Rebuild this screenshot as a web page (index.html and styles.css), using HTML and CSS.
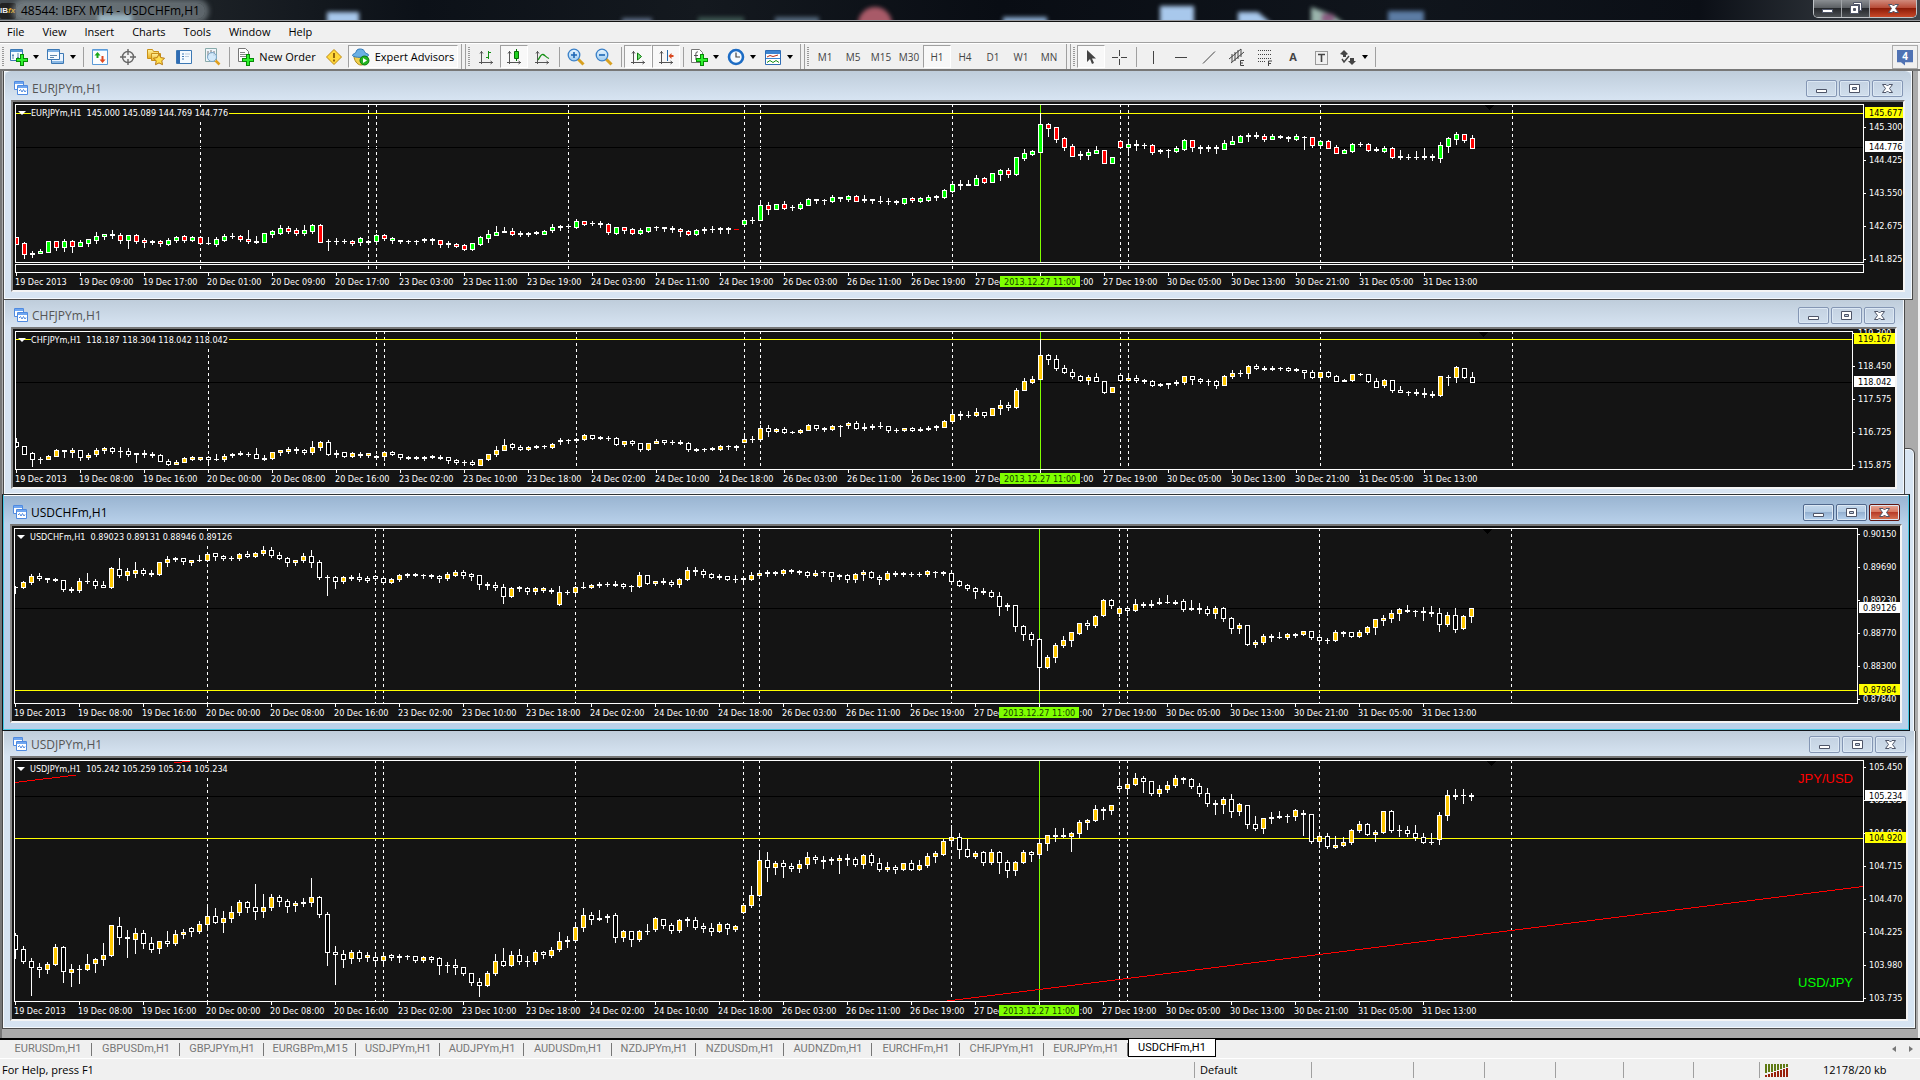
FILE: index.html
```html
<!DOCTYPE html>
<html lang="en">
<head>
    <meta charset="UTF-8">
    <meta name="viewport" content="width=device-width, initial-scale=1.0">
    <title>48544: IBFX MT4 - USDCHFm,H1</title>
    <link rel="stylesheet" href="styles.css">
</head>
<body>
    <!-- icon set -->
    <svg class="sprite" aria-hidden="true">
        <defs>
            <linearGradient id="gold" x1="0" y1="0" x2="0" y2="1"><stop offset="0" stop-color="#fff3a0"/><stop offset="1" stop-color="#eab020"/></linearGradient>
            <linearGradient id="sky" x1="0" y1="0" x2="0" y2="1"><stop offset="0" stop-color="#eaf6ff"/><stop offset="1" stop-color="#9ccbf0"/></linearGradient>
        </defs>
        <symbol id="i-newchart" viewBox="0 0 18 18"><path d="M.5 1.500h12v11h-12z" fill="#f6fbff" stroke="#3c78b4"/><path d="M1 2h11v2H1z" fill="#5a9ad8"/><path d="M3 6v5M2 7.500h2M8 5v6M7 9.500h2" stroke="#5f87ad"/><path d="M10 6h4v4h4v4h-4v4h-4v-4H6v-4h4z" fill="#078a07"/><path d="M11 7h2v4h4v2h-4v4h-2v-4H7v-2h4z" fill="#2ef02e"/></symbol>
        <symbol id="i-profiles" viewBox="0 0 18 18"><path d="M4.500 5.500h12v10h-12z" fill="#eaf4ff" stroke="#3c78b4"/><path d="M5 13h11v2H5z" fill="#8ab8e4"/><path d="M.5 1.500h12v10h-12z" fill="#f6fbff" stroke="#3c78b4"/><path d="M1 2h11v2H1z" fill="#7fb3e6"/><path d="M3 7.500h7M3 9.500h4" stroke="#5f87ad"/></symbol>
        <symbol id="i-market" viewBox="0 0 18 18"><path d="M1.500 1.500h15v15h-15z" fill="#fbfdff" stroke="#5a9ad8"/><path d="M2 2h14v1H2z" fill="#8ac0f0"/><path d="M6.500 4l3 3.500h-2V10h-2V7.500h-2z" fill="#18a818"/><path d="M11.500 15l-3-3.500h2V8h2v3.500h2z" fill="#e04820"/></symbol>
        <symbol id="i-target" viewBox="0 0 18 18"><circle cx="9" cy="9" r="5.500" fill="none" stroke="#666" stroke-width="1.400"/><path d="M9 1v6M9 11v6M1 9h6M11 9h6" stroke="#666" stroke-width="1.400"/></symbol>
        <symbol id="i-star" viewBox="0 0 18 18"><path d="M.5 1.500h5l1 2h5v7h-11z" fill="url(#gold)" stroke="#c89018"/><path d="M4.500 5.500h9v7h-9z" fill="url(#gold)" stroke="#c89018"/><path d="M12 6l1.800 3.600 3.700.6-2.700 2.700.7 3.800-3.500-1.800-3.500 1.800.7-3.800-2.700-2.700 3.700-.6z" fill="#ffe050" stroke="#b87810"/></symbol>
        <symbol id="i-nav" viewBox="0 0 18 18"><path d="M1.500 2.500h15v13h-15z" fill="#f4faff" stroke="#3c78b4"/><path d="M2 3h3v12H2z" fill="#2f6cb4"/><path d="M7 6h2M7 8.500h2M7 11h2" stroke="#3c78b4"/><path d="M10 6h5M10 8.500h4" stroke="#bcd"/></symbol>
        <symbol id="i-tester" viewBox="0 0 18 18"><path d="M2.500.5h11v13h-11z" fill="#eef5fb" stroke="#8aa"/><path d="M5 3v5M8 2v4M11 3v5" stroke="#777"/><circle cx="9" cy="9" r="4.500" fill="#cbe6fa" fill-opacity=".8" stroke="#7aa6c8"/><path d="M12.500 12.500l4 4" stroke="#e0a020" stroke-width="2.500"/></symbol>
        <symbol id="i-order" viewBox="0 0 18 18"><path d="M2.500.5h7l3 3v10h-10z" fill="#fff" stroke="#777"/><path d="M4 4.500h5M4 6.500h6M4 8.500h6" stroke="#888"/><path d="M10 6h4v4h4v4h-4v4h-4v-4H6v-4h4z" fill="#078a07"/><path d="M11 7h2v4h4v2h-4v4h-2v-4H7v-2h4z" fill="#2ef02e"/></symbol>
        <symbol id="i-warn" viewBox="0 0 18 18"><path d="M9 1.500L16.500 9 9 16.500 1.500 9z" fill="#ffd83c" stroke="#c08a10"/><path d="M9 5v5M9 11.500v2" stroke="#7a4a00" stroke-width="1.600"/></symbol>
        <symbol id="i-expert" viewBox="0 0 18 18"><path d="M2 8c0 4 3 9 7 9s6-4 6-9z" fill="#f0d050" stroke="#b08a18"/><path d="M.5 7.500C1 5 4 6 4.500 3S12 .5 12.500 3.500 17 5 16.500 7.500 1 10 .5 7.500z" fill="#6ab0e4" stroke="#2f78b8"/><circle cx="12.500" cy="12.500" r="4.500" fill="#22b422" stroke="#0a7a0a"/><path d="M11 10l4 2.500-4 2.500z" fill="#fff"/></symbol>
        <symbol id="i-axis" viewBox="0 0 18 18"><path d="M4.500 3v13M2 14.500h14M3 5.500l1.500-2 1.500 2M13.500 13l2 1.500-2 1.500" fill="none" stroke="#555"/></symbol>
        <symbol id="i-bars" viewBox="0 0 18 18"><use href="#i-axis"/><path d="M11.500 3v8M9 9.500h2.500M11.500 4.500H14" stroke="#159015"/></symbol>
        <symbol id="i-candle" viewBox="0 0 18 18"><use href="#i-axis"/><path d="M11.500 1v12" stroke="#067006"/><path d="M9.500 3.500h4v7h-4z" fill="#1fd01f" stroke="#067006"/></symbol>
        <symbol id="i-line" viewBox="0 0 18 18"><use href="#i-axis"/><path d="M5 12c2-3 3-6 5-5.500s3 3 6 4" fill="none" stroke="#159015" stroke-width="1.300"/></symbol>
        <symbol id="i-zoomin" viewBox="0 0 18 18"><path d="M11 11l5.500 5.500" stroke="#d8a020" stroke-width="3"/><circle cx="7" cy="7" r="5.800" fill="url(#sky)" stroke="#3a80c8" stroke-width="1.300"/><path d="M7 4v6M4 7h6" stroke="#1c66b4" stroke-width="1.600"/></symbol>
        <symbol id="i-zoomout" viewBox="0 0 18 18"><path d="M11 11l5.500 5.500" stroke="#d8a020" stroke-width="3"/><circle cx="7" cy="7" r="5.800" fill="url(#sky)" stroke="#3a80c8" stroke-width="1.300"/><path d="M4 7h6" stroke="#1c66b4" stroke-width="1.600"/></symbol>
        <symbol id="i-scroll" viewBox="0 0 18 18"><use href="#i-axis"/><path d="M8.500 5l4 3.500-4 3.500z" fill="#7ae07a" stroke="#0a7a0a"/></symbol>
        <symbol id="i-shift" viewBox="0 0 18 18"><use href="#i-axis"/><path d="M10.500 2v11" stroke="#2468a8"/><path d="M11.500 8l3-3v2h2v2h-2v2z" fill="#d84820"/></symbol>
        <symbol id="i-indicator" viewBox="0 0 18 18"><path d="M1.500 1.500h8l3 3v10h-11z" fill="#fff" stroke="#777"/><path d="M8 4c-3-1-2 3-2 8M4 7.500h4" fill="none" stroke="#555"/><path d="M10 6h4v4h4v4h-4v4h-4v-4H6v-4h4z" fill="#078a07"/><path d="M11 7h2v4h4v2h-4v4h-2v-4H7v-2h4z" fill="#2ef02e"/></symbol>
        <symbol id="i-clock" viewBox="0 0 18 18"><circle cx="9" cy="9" r="7" fill="#f4faff" stroke="#1d6cc4" stroke-width="2.600"/><path d="M9 4.500V9h4" fill="none" stroke="#444" stroke-width="1.200"/></symbol>
        <symbol id="i-template" viewBox="0 0 18 18"><path d="M1.500 2.500h15v14h-15z" fill="#fff" stroke="#2f6cb4"/><path d="M2 3h14v3H2zM2 10h14v1H2z" fill="#3c84d0"/><path d="M3 9l3-1.500 3 1 5-1.500" fill="none" stroke="#b83018"/><path d="M3 14.500l3-2 3 2 3-2 3 2" fill="none" stroke="#159015"/></symbol>
        <symbol id="i-cursor" viewBox="0 0 18 18"><path d="M5 2v12l3-3 2 5 2-1-2-4.500h4z" fill="#444"/></symbol>
        <symbol id="i-cross" viewBox="0 0 18 18"><path d="M9.500 2v6M9.500 11v6M2 9.500h6M11 9.500h6" stroke="#444"/></symbol>
        <symbol id="i-vline" viewBox="0 0 18 18"><path d="M9.500 3v13" stroke="#444"/></symbol>
        <symbol id="i-hline" viewBox="0 0 18 18"><path d="M3 9.500h12" stroke="#444"/></symbol>
        <symbol id="i-trend" viewBox="0 0 18 18"><path d="M3 15.500L15 3.500" stroke="#444"/></symbol>
        <symbol id="i-channel" viewBox="0 0 18 18"><path d="M1 11L13 1M3 15L16 4M4 6v8M7 4v9M10 2v9M13 1v8" stroke="#444"/><path d="M16 12.500h-3.500v5H16M12.500 15H15" fill="none" stroke="#444"/></symbol>
        <symbol id="i-fibo" viewBox="0 0 18 18"><path d="M2 2.500h14M2 6.500h14M2 10.500h14M2 13.500h8" stroke="#444" stroke-dasharray="1 1"/><path d="M12.500 18v-5H16M12.500 15.500H15" fill="none" stroke="#444"/></symbol>
        <symbol id="i-label" viewBox="0 0 18 18"><path d="M3.500 3.500h12v13h-12z" fill="none" stroke="#444" stroke-dasharray="1 1"/><path d="M6 6.500h7M9.500 6v8" stroke="#444" stroke-width="1.600"/></symbol>
        <symbol id="i-shapes" viewBox="0 0 18 18"><path d="M5 2l4 4-2 1v2H4V7L1 6zM13 17l-4-4h2v-3h4v3h2z" fill="#444"/><path d="M3 11l2 3 5-6" fill="none" stroke="#444" stroke-width="1.400"/></symbol>
        <symbol id="i-window" viewBox="0 0 14 14"><path d="M.5.5h9v8h-9z" fill="#fff" stroke="#4f8ae0"/><path d="M1 1h8v2H1z" fill="#6fa6f0"/><path d="M3.500 4.500h10v9h-10z" fill="#fff" stroke="#4f8ae0"/><path d="M4 5h9v2H4z" fill="#6fa6f0"/><path d="M5 10l1.500-1.500L8 11l1.500-2.500L11 11l1-1.500" fill="none" stroke="#4f8ae0"/></symbol>
        <symbol id="w-min" viewBox="0 0 15 13"><path d="M2.500 7.500h10v3h-10z" fill="#fff" stroke="#4e5568"/></symbol>
        <symbol id="w-max" viewBox="0 0 15 13"><path d="M2.500 2.500h10v8h-10z" fill="#fff" stroke="#4e5568"/><path d="M5.500 5.500h4v2h-4z" fill="#c4d2e2" stroke="#4e5568"/></symbol>
        <symbol id="w-close" viewBox="0 0 15 13"><path d="M2.500 2.500h3.500l1.500 1.500L9 2.500h3.500L9.500 6.500l3 4H9L7.500 9 6 10.500H2.500l3-4z" fill="#fff" stroke="#4e5568"/></symbol>
        <symbol id="w-restore" viewBox="0 0 15 13"><path d="M5.500.5h8v8h-2v-6h-6z" fill="#fff" stroke="#4e5568"/><path d="M2.500 3.500h8v8h-8z" fill="#fff" stroke="#4e5568"/><path d="M5.500 6.500h2v2h-2z" fill="#555" stroke="#4e5568"/></symbol>
    </svg>

    <header class="title-bar">
        <svg class="glass" aria-hidden="true">
            <g filter="blur(2px)">
                <rect x="98" y="14" width="34" height="12" fill="#9cc6dc"/>
                <rect x="327" y="12" width="32" height="12" fill="#a8c8ec"/>
                <rect x="622" y="18" width="30" height="8" fill="#5c6c84"/>
                <rect x="698" y="17" width="46" height="8" fill="#3c5450"/>
                <rect x="775" y="17" width="44" height="8" fill="#54687c"/>
                <circle cx="875" cy="24" r="17" fill="#a85a68"/>
                <rect x="1003" y="17" width="44" height="8" fill="#88a8cc"/>
                <rect x="1160" y="6" width="34" height="18" fill="#a8c8ec"/>
                <path d="M1238 12h20l14 12h-34z" fill="#a8c8ec"/>
                <path d="M1311 7l22 8 12 9h-34z" fill="#9ab4ac"/>
                <path d="M1322 14h12v8h-12z" fill="#8a5a80"/>
                <rect x="1388" y="11" width="36" height="12" fill="#5c7ca4"/>
            </g>
        </svg>
        <span class="app-icon">IB<i>fx</i></span>
        <h1>48544: IBFX MT4 - USDCHFm,H1</h1>
        <div class="caption">
            <button aria-label="Minimize"><svg><use href="#w-min"/></svg></button>
            <button aria-label="Restore"><svg><use href="#w-restore"/></svg></button>
            <button class="close" aria-label="Close"><svg><use href="#w-close"/></svg></button>
        </div>
    </header>

    <nav class="menu-bar">
        <button>File</button>
        <button>View</button>
        <button>Insert</button>
        <button>Charts</button>
        <button>Tools</button>
        <button>Window</button>
        <button>Help</button>
    </nav>

    <div class="toolbar">
        <span class="grip"></span>
        <button class="tool drop" aria-label="New chart"><svg><use href="#i-newchart"/></svg></button>
        <button class="tool drop" aria-label="Profiles"><svg><use href="#i-profiles"/></svg></button>
        <span class="sep"></span>
        <button class="tool" aria-label="Market watch"><svg><use href="#i-market"/></svg></button>
        <button class="tool" aria-label="Data window"><svg><use href="#i-target"/></svg></button>
        <button class="tool" aria-label="Navigator"><svg><use href="#i-star"/></svg></button>
        <button class="tool" aria-label="Terminal"><svg><use href="#i-nav"/></svg></button>
        <button class="tool" aria-label="Strategy tester"><svg><use href="#i-tester"/></svg></button>
        <span class="sep"></span>
        <button class="tool order"><svg><use href="#i-order"/></svg>New Order</button>
        <button class="tool" aria-label="MetaEditor"><svg><use href="#i-warn"/></svg></button>
        <button class="tool expert on"><svg><use href="#i-expert"/></svg>Expert Advisors</button>
        <span class="sep end"></span>
        <span class="grip"></span>
        <button class="tool" aria-label="Bar chart"><svg><use href="#i-bars"/></svg></button>
        <button class="tool on" aria-label="Candlesticks"><svg><use href="#i-candle"/></svg></button>
        <button class="tool" aria-label="Line chart"><svg><use href="#i-line"/></svg></button>
        <span class="sep"></span>
        <button class="tool" aria-label="Zoom in"><svg><use href="#i-zoomin"/></svg></button>
        <button class="tool" aria-label="Zoom out"><svg><use href="#i-zoomout"/></svg></button>
        <span class="sep"></span>
        <button class="tool on" aria-label="Auto scroll"><svg><use href="#i-scroll"/></svg></button>
        <button class="tool on" aria-label="Chart shift"><svg><use href="#i-shift"/></svg></button>
        <span class="sep"></span>
        <button class="tool drop" aria-label="Indicators"><svg><use href="#i-indicator"/></svg></button>
        <button class="tool drop" aria-label="Periods"><svg><use href="#i-clock"/></svg></button>
        <button class="tool drop" aria-label="Templates"><svg><use href="#i-template"/></svg></button>
        <span class="sep end"></span>
        <span class="grip"></span>
        <button class="tool">M1</button>
        <button class="tool">M5</button>
        <button class="tool">M15</button>
        <button class="tool">M30</button>
        <button class="tool on">H1</button>
        <button class="tool">H4</button>
        <button class="tool">D1</button>
        <button class="tool">W1</button>
        <button class="tool">MN</button>
        <span class="sep end"></span>
        <span class="grip"></span>
        <button class="tool on" aria-label="Cursor"><svg><use href="#i-cursor"/></svg></button>
        <button class="tool" aria-label="Crosshair"><svg><use href="#i-cross"/></svg></button>
        <span class="sep"></span>
        <button class="tool" aria-label="Vertical line"><svg><use href="#i-vline"/></svg></button>
        <button class="tool" aria-label="Horizontal line"><svg><use href="#i-hline"/></svg></button>
        <button class="tool" aria-label="Trendline"><svg><use href="#i-trend"/></svg></button>
        <button class="tool" aria-label="Equidistant channel"><svg><use href="#i-channel"/></svg></button>
        <button class="tool" aria-label="Fibonacci"><svg><use href="#i-fibo"/></svg></button>
        <button class="tool letter">A</button>
        <button class="tool" aria-label="Text label"><svg><use href="#i-label"/></svg></button>
        <button class="tool drop" aria-label="Arrows"><svg><use href="#i-shapes"/></svg></button>
        <span class="sep"></span>
        <button class="chat">4</button>
    </div>

    <main class="workspace">
        <div class="window behind"></div>
        <section class="window win1">
            <div class="win-title">
                <svg class="win-icon"><use href="#i-window"/></svg>
                <h2>EURJPYm,H1</h2>
                <button aria-label="Minimize"><svg><use href="#w-min"/></svg></button>
                <button aria-label="Maximize"><svg><use href="#w-max"/></svg></button>
                <button class="close" aria-label="Close"><svg><use href="#w-close"/></svg></button>
            </div>
            <div class="chart" id="eurjpy"><p class="quote">EURJPYm,H1&nbsp; 145.000 145.089 144.769 144.776</p></div>
        </section>
        <section class="window win2">
            <div class="win-title">
                <svg class="win-icon"><use href="#i-window"/></svg>
                <h2>CHFJPYm,H1</h2>
                <button aria-label="Minimize"><svg><use href="#w-min"/></svg></button>
                <button aria-label="Maximize"><svg><use href="#w-max"/></svg></button>
                <button class="close" aria-label="Close"><svg><use href="#w-close"/></svg></button>
            </div>
            <div class="chart" id="chfjpy"><p class="quote">CHFJPYm,H1&nbsp; 118.187 118.304 118.042 118.042</p></div>
        </section>
        <section class="window win3 active">
            <div class="win-title">
                <svg class="win-icon"><use href="#i-window"/></svg>
                <h2>USDCHFm,H1</h2>
                <button aria-label="Minimize"><svg><use href="#w-min"/></svg></button>
                <button aria-label="Maximize"><svg><use href="#w-max"/></svg></button>
                <button class="close" aria-label="Close"><svg><use href="#w-close"/></svg></button>
            </div>
            <div class="chart" id="usdchf"><p class="quote">USDCHFm,H1&nbsp; 0.89023 0.89131 0.88946 0.89126</p></div>
        </section>
        <section class="window win4">
            <div class="win-title">
                <svg class="win-icon"><use href="#i-window"/></svg>
                <h2>USDJPYm,H1</h2>
                <button aria-label="Minimize"><svg><use href="#w-min"/></svg></button>
                <button aria-label="Maximize"><svg><use href="#w-max"/></svg></button>
                <button class="close" aria-label="Close"><svg><use href="#w-close"/></svg></button>
            </div>
            <div class="chart" id="usdjpy">
                <p class="quote">USDJPYm,H1&nbsp; 105.242 105.259 105.214 105.234</p>
                <span class="pair sell">JPY/USD</span>
                <span class="pair buy">USD/JPY</span>
            </div>
        </section>
    </main>

    <nav class="tabs">
        <button>EURUSDm,H1</button>
        <button>GBPUSDm,H1</button>
        <button class="narrow">GBPJPYm,H1</button>
        <button class="wide">EURGBPm,M15</button>
        <button class="narrow">USDJPYm,H1</button>
        <button class="narrow">AUDJPYm,H1</button>
        <button>AUDUSDm,H1</button>
        <button class="narrow">NZDJPYm,H1</button>
        <button>NZDUSDm,H1</button>
        <button>AUDNZDm,H1</button>
        <button>EURCHFm,H1</button>
        <button class="narrow">CHFJPYm,H1</button>
        <button class="narrow">EURJPYm,H1</button>
        <button class="current">USDCHFm,H1</button>
        <span class="scrollers"><i class="left"></i><i class="right"></i></span>
    </nav>

    <footer class="status-bar">
        <span>For Help, press F1</span>
        <span>Default</span>
        <span></span>
        <span></span>
        <span></span>
        <span></span>
        <span></span>
        <span></span>
        <span class="traffic">
            <svg width="24" height="13" shape-rendering="crispEdges">
                <path d="M1 0v9M4 0v8M7 0v8M10 0v7M13 0v6M16 0v5M19 0v4M22 0v3" stroke="#5f7a14" stroke-width="2"/>
                <path d="M1 11v2M4 10v3M7 9v4M10 8v5M13 7v6M16 6v7M19 5v8M22 4v9" stroke="#98200c" stroke-width="2"/>
            </svg>
            12178/20 kb
        </span>
    </footer>

    <script src="charts.js"></script>
</body>
</html>
```

FILE: styles.css
```css
* {
    box-sizing: border-box;
}

body {
    margin: 0;
    min-height: 100vh;
    display: flex;
    flex-direction: column;
    background: #f0f0f0;
    color: #000;
    font: 11px/16px "Open Sans", "Noto Sans", sans-serif;
    overflow: hidden;
}

button {
    margin: 0;
    padding: 0;
    border: 0;
    background: none;
    color: inherit;
    font: inherit;
}

h1, h2, p {
    margin: 0;
    font: inherit;
}

.sprite {
    position: absolute;
    width: 0;
    height: 0;
}

/* title bar */
.title-bar {
    position: relative;
    display: flex;
    align-items: center;
    height: 22px;
    background: linear-gradient(90deg, #444b50 0, #1c2126 200px, #0c1118 420px, #14191f 700px, #090d14 1000px, #10151c 1400px, #0b0f16 1700px, #40464c 100%);
    border-bottom: 1px solid #111;
    box-shadow: inset 0 -1px #9a9ca0;
    overflow: hidden;
}

.glass {
    position: absolute;
    left: 0;
    top: 0;
    width: 100%;
    height: 20px;
}

.app-icon {
    position: relative;
    width: 16px;
    height: 16px;
    background: #222;
    border-radius: 2px;
    color: #eee;
    font: bold 8px/16px "Liberation Sans", sans-serif;
    overflow: hidden;
}

.app-icon i {
    color: #f0b020;
}

.title-bar h1 {
    position: relative;
    padding: 0 5px;
    border-radius: 10px;
    background: rgba(150, 160, 165, 0.55);
    box-shadow: 0 0 5px 4px rgba(150, 160, 165, 0.55);
    font-size: 12px;
}

.caption {
    position: relative;
    display: flex;
    align-self: flex-start;
    margin-left: auto;
    margin-right: 3px;
    border: 1px solid #c0c4c8;
    border-top: 0;
    border-radius: 0 0 5px 5px;
    overflow: hidden;
}

.caption button {
    width: 28px;
    height: 17px;
    border-right: 1px solid #a0a4a8;
    background: linear-gradient(#8a8e92 0, #5c6064 45%, #25282c 50%, #4c5054 100%);
}

.caption .close {
    width: 46px;
    border-right: 0;
    background: linear-gradient(#d08a7c 0, #b84c38 45%, #8c1c08 50%, #c84828 100%);
}

.caption svg {
    display: block;
    margin: 1px auto;
    width: 15px;
    height: 13px;
}

/* menu */
.menu-bar {
    display: flex;
    gap: 18px;
    height: 21px;
    padding: 0 7px;
    border-bottom: 1px solid #a0a0a0;
}

/* toolbar */
.toolbar {
    display: flex;
    align-items: center;
    height: 28px;
    border-top: 1px solid #fff;
    border-bottom: 2px solid #777;
}

.grip {
    width: 6px;
    height: 20px;
    background: repeating-linear-gradient(#999 0, #999 1px, #f0f0f0 1px, #f0f0f0 2px) 2px 0 / 2px 100% no-repeat;
}

.sep {
    width: 6px;
    height: 20px;
    background: linear-gradient(#a0a0a0, #a0a0a0) 3px 0 / 1px 100% no-repeat;
}

.sep.end {
    width: 8px;
    height: 25px;
    border-right: 1px solid #a0a0a0;
}

.tool {
    display: flex;
    align-items: center;
    justify-content: center;
    width: 28px;
    height: 23px;
    color: #444;
    font: 10px/12px "Open Sans", "Noto Sans", sans-serif;
}

.tool svg {
    width: 18px;
    height: 18px;
}

.tool.on {
    border: 1px solid #a0a0a0;
    border-right-color: #fff;
    border-bottom-color: #fff;
    background: #f8f8f8;
}

.tool.drop {
    width: 37px;
    gap: 5px;
}

.tool.drop::after {
    content: "";
    border: 3px solid transparent;
    border-top: 4px solid #000;
    border-bottom: 0;
}

.tool.order,
.tool.expert {
    gap: 5px;
    color: #000;
    font-size: 11px;
    line-height: 16px;
    white-space: nowrap;
}

.tool.order {
    width: 88px;
}

.tool.expert {
    width: 110px;
}

.tool.letter {
    font: bold 11px/16px "Open Sans", sans-serif;
}

.chat {
    position: relative;
    width: 26px;
    height: 24px;
    margin: 0 2px 0 auto;
    border: 1px solid #aaa;
    color: #fff;
    font: bold 10px/13px "Open Sans", sans-serif;
    z-index: 0;
}

.chat::before {
    content: "";
    position: absolute;
    left: 4px;
    top: 4px;
    width: 16px;
    height: 16px;
    background: #4f72b4;
    clip-path: polygon(0 0, 100% 0, 100% 80%, 50% 80%, 50% 100%, 25% 80%, 0 80%);
    z-index: -1;
}

/* chart windows */
.workspace {
    position: relative;
    flex: 1;
    background: #ababab;
    border-left: 2px solid #777;
    border-right: 2px solid #f0f0f0;
    overflow: hidden;
}

.window {
    position: relative;
    padding: 0 7px 7px;
    background: #d7e4f2;
    border: 1px solid #4a4a4a;
    border-top: 0;
    box-shadow: inset 0 0 0 1px #f4f8fc;
}

.win-title {
    display: flex;
    align-items: flex-end;
    gap: 2px;
    margin: 0 -6px;
    padding: 0 8px 3px 8px;
    background: linear-gradient(#bfcddb, #d7e4f2);
    color: #555;
}

.win-title h2 {
    flex: 1;
    padding-left: 2px;
    font-size: 12px;
}

.win-icon {
    width: 14px;
    height: 14px;
    margin: 0 0 2px 1px;
}

.win-title button {
    width: 31px;
    height: 17px;
    border: 1px solid #8496b4;
    border-radius: 2px;
    background: linear-gradient(#c4d2e2, #d0deec);
    box-shadow: inset 0 0 0 1px #dce8f4;
}

.win-title button svg {
    display: block;
    margin: 1px auto;
    width: 15px;
    height: 13px;
}

.active {
    background: #b9d1ea;
    border-color: #101418;
    border-top: 1px solid #303438;
    box-shadow: inset 0 0 0 1px #45c8e4;
}

.active .win-title {
    background: linear-gradient(#99b4d1, #b9d1ea);
    color: #000;
}

.active .win-title button {
    border-color: #50688c;
    background: linear-gradient(#c4d8ec 0, #b4cce4 45%, #94b0d0 50%, #b8d4f0 100%);
}

.active .win-title .close {
    border-color: #601410;
    background: linear-gradient(#e8a898 0, #d87860 45%, #b83c28 50%, #d87858 100%);
}

.win1 {
    margin: 0 5px 0 1px;
}

.win1 .win-title {
    height: 29px;
    border-radius: 6px 6px 0 0;
}

.win2 {
    margin: 0 13px 0 1px;
    padding-bottom: 5px;
    border-bottom: 0;
}

.win2 .win-title {
    height: 27px;
}

.win3 {
    margin: 0 8px 0 0;
}

.win3 .win-title {
    height: 29px;
    border-top: 1px solid #fff;
}

.win4 {
    margin: 0 2px 0 0;
}

.win4 .win-title {
    height: 25px;
}

.behind {
    position: absolute;
    top: 377px;
    right: 3px;
    width: 60px;
    height: 290px;
    border-top: 1px solid #4a4a4a;
    border-radius: 6px;
}

.chart {
    position: relative;
    border: 2px solid #f4f4f4;
    border-top-color: #777;
    border-left-color: #888;
    background: #141414;
    overflow: hidden;
}

.chart svg {
    display: block;
    width: 100%;
}

.chart text {
    font: 9px "DejaVu Sans Condensed", "DejaVu Sans", sans-serif;
    fill: #fff;
}

.chart .stamp {
    fill: #143c00;
}

.chart .dark {
    fill: #000;
}

.quote {
    position: absolute;
    left: 18px;
    top: 5px;
    padding-right: 1px;
    background: #141414;
    color: #fff;
    font: 9px/12px "DejaVu Sans Condensed", "DejaVu Sans", sans-serif;
    white-space: nowrap;
}

.quote::before {
    content: "";
    position: absolute;
    left: -13px;
    top: 4px;
    border: 4px solid transparent;
    border-top-color: #fff;
    border-bottom: 0;
}

.pair {
    position: absolute;
    right: 53px;
    font: 13px/16px "Liberation Sans", Arial, sans-serif;
}

.sell {
    top: 13px;
    color: #f00;
}

.buy {
    bottom: 28px;
    color: #0f0;
}

/* chart tabs */
.tabs {
    display: flex;
    height: 21px;
    padding-left: 4px;
    border-top: 2px solid #000;
    border-bottom: 1px solid #fff;
    color: #777;
    font: 11px/16px Roboto, sans-serif;
}

.tabs button {
    width: 88px;
    height: 17px;
    line-height: 15px;
    background: linear-gradient(#777, #777) 100% 3px / 1px 13px no-repeat;
}

.tabs .narrow {
    width: 84px;
}

.tabs .wide {
    width: 92px;
}

.tabs .current {
    height: 18px;
    margin-top: -1px;
    border: 1px solid #000;
    border-top: 0;
    background: #fff;
    color: #000;
}

.scrollers {
    display: flex;
    align-items: center;
    gap: 13px;
    margin-left: auto;
    padding-right: 7px;
}

.scrollers i {
    border: 4px solid transparent;
    border-width: 3px 4px;
}

.scrollers .left {
    border-left: 0;
    border-right-color: #777;
}

.scrollers .right {
    border-right: 0;
    border-left-color: #777;
}

/* status bar */
.status-bar {
    display: grid;
    grid-template-columns: 1fr 117px 102px 71px 71px 68px 70px 66px 161px;
    height: 21px;
    padding-top: 3px;
}

.status-bar span {
    height: 16px;
    padding-left: 5px;
    border-left: 1px solid #a0a0a0;
}

.status-bar span:first-child {
    padding-left: 2px;
    border: 0;
}

.status-bar .traffic {
    display: flex;
    align-items: center;
    gap: 34px;
}
```

FILE: charts.js
```js
// Candles are "open high low close", in rows below the top edge of the plot.
var eurjpy = `133 133 140 140,139 138 154 150,149 147 153 150,149 145 149 147,148 137 148 137,137 137 146 143,143 135 147 137,137 136 148 142,142 136 142 138,139 135 142 135,
136 128 139 132,132 130 135 130,130 126 134 131,131 129 139 136,136 131 144 131,131 130 139 137,136 134 143 138,137 136 140 138,137 136 142 139,140 134 141 136,
136 132 138 133,132 131 138 136,136 132 137 133,133 132 140 139,139 133 140 139,140 133 142 135,136 130 137 132,132 129 134 132,132 131 137 135,135 126 139 137,
137 132 139 138,138 129 138 129,130 126 133 127,129 121 130 124,124 122 129 127,126 124 131 129,129 121 131 126,127 120 129 121,121 120 138 138,137 135 146 137,
137 134 140 137,137 135 139 137,137 136 141 139,138 133 141 134,137 136 139 138,137 130 139 131,131 130 136 134,136 133 139 134,136 136 139 137,137 136 139 137,
137 136 140 137,135 134 138 136,135 134 140 136,136 136 143 140,139 137 143 140,140 139 143 142,141 140 146 145,145 139 146 139,140 132 141 133,134 126 138 130,
131 122 131 128,127 123 128 128,127 124 131 130,129 127 132 130,129 128 132 130,128 127 130 129,130 126 130 127,126 120 128 123,122 121 126 123,122 121 124 122,
123 115 124 117,117 117 121 120,119 117 121 119,119 117 123 120,120 119 130 128,129 123 130 123,123 123 129 126,125 124 130 129,129 124 130 126,127 123 128 123,
123 122 126 123,123 123 127 124,124 122 128 125,125 124 132 127,127 126 131 130,130 125 131 126,125 123 129 126,125 122 128 125,124 123 129 125,124 123 129 125,
125 125 125 125,120 115 121 116,116 113 119 116,116 98 116 101,101 98 110 105,105 100 105 100,100 97 105 104,103 101 106 103,104 98 105 100,101 94 101 95,
95 95 99 96,96 95 100 96,97 91 98 93,93 93 97 94,95 91 97 92,92 91 97 97,95 91 98 96,95 95 99 96,97 92 99 97,97 94 100 97,
97 96 100 98,99 94 100 94,94 93 98 96,97 93 98 94,96 91 97 93,92 91 96 93,93 85 94 86,87 77 88 80,80 76 85 81,80 76 81 81,
81 71 81 74,74 73 79 78,78 69 78 69,70 65 76 66,66 64 73 70,70 53 71 53,54 45 56 49,50 46 51 47,48 9 48 20,20 19 32 24,
23 23 38 35,34 33 46 43,42 40 52 52,50 47 55 51,51 45 55 48,49 42 49 46,46 46 59 59,59 53 59 53,37 36 43 43,43 35 51 40,
40 36 46 41,41 39 44 41,41 40 50 48,46 45 49 47,46 45 53 46,47 42 48 44,45 35 46 36,36 36 47 43,43 41 49 44,43 41 47 44,
43 41 49 44,45 36 45 39,40 32 40 37,38 31 38 32,31 29 37 32,31 28 34 32,32 30 37 35,35 30 35 32,32 31 34 33,33 32 37 34,
35 30 36 32,33 32 45 33,33 33 43 41,41 36 44 37,37 36 44 44,43 41 49 49,49 45 49 46,47 39 48 40,40 38 42 40,40 39 47 46,
45 43 47 46,47 42 48 44,44 43 54 53,52 46 55 53,53 50 55 53,53 47 55 53,52 44 55 53,52 50 56 53,54 38 58 41,42 33 48 34,
35 28 40 30,30 30 38 36,34 31 44 44`;

var chfjpy = `111 107 116 115,115 115 123 123,122 121 135 128,128 126 132 128,128 124 128 125,125 118 125 119,119 119 126 120,121 117 126 119,119 119 129 126,126 122 128 124,
123 117 125 119,119 116 122 117,117 116 122 120,120 116 126 120,120 117 125 123,122 122 131 123,122 119 126 123,123 121 126 124,124 123 130 130,130 128 134 133,
133 129 133 131,131 126 131 127,128 125 129 126,128 126 129 126,126 125 134 128,128 123 129 128,128 123 130 125,124 122 126 123,122 120 124 123,123 121 125 123,
123 117 127 127,127 124 129 128,127 121 128 121,121 119 124 119,120 116 122 118,118 116 122 119,119 118 123 121,121 110 123 116,116 110 119 111,111 109 124 123,
123 119 126 122,121 121 126 125,125 121 126 122,123 121 126 124,124 122 126 122,125 124 128 126,125 120 129 121,121 120 124 123,123 123 128 126,126 125 128 127,
126 125 128 127,126 125 129 127,125 124 127 126,126 124 128 127,126 126 132 129,129 128 133 131,131 129 134 131,131 129 134 133,134 128 134 128,128 123 129 123,
123 115 125 119,119 108 119 114,113 112 118 116,116 114 119 118,118 115 119 116,115 114 117 116,115 114 117 115,116 112 117 113,109 107 113 110,109 108 112 109,
108 107 111 109,108 103 109 104,104 104 108 107,106 105 108 107,107 105 109 107,107 106 114 113,113 110 115 110,110 109 114 112,112 112 120 118,118 112 119 112,
112 108 112 110,109 109 113 111,111 109 113 111,111 109 113 112,112 111 120 118,118 117 120 119,118 117 120 118,117 116 119 118,118 114 119 115,115 114 118 115,
115 114 119 116,111 102 111 108,108 105 111 108,108 94 109 97,97 94 105 100,100 97 101 98,98 96 102 101,101 100 102 101,101 98 102 99,99 93 99 94,
94 94 99 97,97 96 100 98,98 94 99 95,95 94 105 95,94 91 97 92,92 90 98 97,96 92 99 97,95 93 98 96,95 91 97 95,95 95 101 99,
99 97 101 99,99 97 100 97,97 96 100 99,98 96 100 99,97 95 99 98,95 94 99 96,96 89 96 90,90 78 91 83,83 80 88 84,84 80 86 84,
84 77 85 81,81 81 86 84,84 77 84 77,77 69 83 74,74 71 79 76,76 57 77 59,59 47 59 50,51 45 52 48,48 8 48 24,24 23 33 28,
28 24 39 37,37 34 42 41,41 38 47 45,45 44 50 49,49 44 53 46,46 42 50 50,50 50 62 61,61 56 61 56,44 43 50 49,49 42 50 47,
47 44 51 49,49 48 52 50,50 49 55 54,53 52 55 54,52 52 57 53,51 49 54 52,51 45 53 45,45 45 53 48,48 47 52 50,50 48 54 50,
50 49 57 54,54 44 54 45,45 39 47 42,42 39 45 42,42 34 47 35,35 33 38 37,37 35 39 38,37 35 39 38,37 36 39 37,37 36 40 39,
38 37 40 39,39 39 47 41,41 39 47 46,46 41 50 41,41 40 46 45,45 44 50 50,49 48 50 50,49 43 50 43,43 42 44 43,43 43 51 50,
50 47 56 56,54 48 56 49,49 49 61 59,59 55 61 61,61 60 64 61,61 58 64 62,62 57 66 63,63 60 66 64,64 45 65 45,46 44 54 46,
46 35 51 36,37 37 47 46,46 41 51 51`;

var usdchf = `59 58 65 59,59 53 60 54,54 46 56 48,48 45 52 50,50 50 54 51,51 50 53 52,52 52 63 61,61 59 64 62,62 50 64 53,53 45 55 53,
53 51 60 57,57 53 59 59,59 39 60 40,41 30 49 47,47 40 52 43,45 34 49 42,42 40 47 45,45 42 48 46,46 34 47 34,34 28 38 31,
30 29 33 31,30 30 36 33,34 32 37 32,32 27 33 32,32 24 33 26,25 25 32 28,28 27 32 30,30 28 32 30,30 25 32 26,26 23 29 28,
28 24 29 25,25 18 27 22,22 19 29 27,27 24 31 30,30 29 38 34,34 32 37 32,32 25 34 28,28 22 39 34,34 32 51 49,49 47 67 49,
49 48 60 53,53 48 55 49,49 47 52 50,49 45 53 51,50 48 54 52,48 47 52 50,50 49 55 54,54 50 55 51,51 46 53 47,46 45 49 47,
46 45 48 47,47 46 50 47,47 46 50 48,48 47 54 50,50 44 52 46,47 42 48 44,44 42 50 47,46 45 52 48,47 47 61 56,56 54 61 57,
57 54 62 59,59 56 75 68,68 59 69 60,59 58 63 60,60 59 66 63,63 59 66 60,62 59 64 60,62 60 65 63,76 58 77 64,64 62 66 64,
64 58 65 59,59 54 60 59,59 56 60 57,56 54 59 57,56 54 58 56,56 53 58 57,56 55 60 58,58 57 63 58,58 44 59 47,47 47 56 55,
55 53 57 53,53 50 56 54,54 52 58 56,56 50 59 51,51 39 52 42,42 39 47 43,43 41 49 46,46 45 50 49,48 46 51 49,48 48 52 51,
51 47 54 51,50 48 54 51,51 44 52 47,47 42 50 45,44 42 48 45,44 43 47 45,45 41 47 42,42 41 45 43,43 42 46 44,44 43 49 47,
47 42 48 45,44 43 48 44,44 44 53 48,47 46 51 48,47 46 54 51,51 45 54 46,46 42 52 44,44 43 50 49,49 47 56 51,51 43 52 45,
45 43 48 46,45 44 48 46,46 44 48 46,46 44 48 46,46 42 48 43,44 43 49 44,44 43 47 45,45 43 55 53,53 52 58 57,57 56 62 60,
60 59 70 63,63 60 66 64,64 62 69 68,68 64 87 78,77 75 82 78,77 77 103 98,98 97 112 106,106 104 117 111,111 110 162 139,139 127 140 129,
129 115 134 117,117 108 119 112,112 104 118 104,105 95 106 95,95 92 101 97,97 87 99 88,87 71 88 72,72 71 80 77,85 78 88 80,80 78 87 82,
82 71 83 76,76 74 79 77,76 72 79 77,74 70 76 75,74 67 75 74,74 72 76 75,73 71 83 81,80 72 82 81,80 75 85 81,81 78 87 85,
85 78 90 80,80 79 93 90,90 89 105 100,100 95 105 97,97 97 117 116,116 112 119 114,114 106 116 108,108 106 113 109,109 104 110 109,109 105 111 106,
106 105 109 107,106 103 107 103,103 103 111 109,109 106 116 112,112 110 115 112,112 102 113 104,104 103 108 105,104 104 109 108,108 102 109 104,104 98 106 99,
99 91 106 91,92 87 97 90,90 82 94 85,85 80 92 81,82 77 84 83,83 82 88 83,83 79 92 84,84 78 88 85,85 80 103 96,96 84 98 87,
87 80 104 101,100 87 101 88,88 80 94 80`;

var usdjpy = `175 173 198 189,189 186 203 201,201 198 235 207,207 203 217 209,209 202 213 204,204 184 205 187,187 186 222 211,212 204 226 209,209 205 223 209,209 194 210 204,
203 198 212 199,199 183 205 195,195 165 196 165,166 157 184 177,177 170 197 178,179 168 193 173,173 170 188 183,183 177 192 189,188 181 193 181,181 171 186 183,
183 170 185 174,174 169 178 172,168 167 176 171,171 161 173 164,164 144 170 156,156 148 163 162,162 151 172 158,158 146 162 152,152 140 155 142,142 141 152 147,
147 124 159 151,151 134 157 147,147 134 150 137,137 135 146 141,141 139 152 146,145 141 151 143,142 138 146 143,142 118 146 137,137 136 157 154,154 152 205 192,
192 186 224 194,194 190 207 199,198 190 203 192,192 190 201 198,197 192 201 195,197 193 204 200,200 195 205 196,195 194 200 197,196 194 202 197,196 195 199 196,
196 196 202 200,200 196 202 197,197 196 202 199,198 197 214 205,205 202 212 205,205 199 214 207,207 207 215 213,213 213 225 222,222 218 236 225,225 211 226 213,
213 194 215 201,201 188 206 205,205 191 206 195,195 189 204 201,201 196 206 201,201 190 204 192,192 191 198 194,195 187 197 190,189 172 191 181,180 176 187 181,
180 162 182 167,167 148 171 155,155 152 164 159,158 150 160 159,156 154 162 157,155 153 182 177,177 170 181 171,171 171 186 179,179 170 181 171,171 164 174 171,
169 157 171 158,159 159 168 165,165 163 173 170,170 159 172 160,159 157 166 160,160 157 169 167,166 163 172 168,168 163 175 171,171 162 172 164,164 163 174 168,
169 165 171 166,152 143 153 145,145 126 147 135,135 90 136 100,100 92 121 107,107 101 114 103,103 100 117 106,106 103 111 108,108 100 112 104,104 92 108 97,
97 95 103 99,100 96 108 101,99 97 104 100,100 95 113 98,98 94 105 99,99 97 106 104,104 94 108 95,95 93 105 102,103 98 111 109,109 102 111 107,
107 105 113 109,109 103 110 103,103 100 110 109,109 100 110 105,105 93 107 96,96 91 102 93,94 79 95 81,80 65 85 77,77 73 98 89,89 79 97 96,
96 91 98 93,92 91 105 102,102 89 104 92,92 91 113 102,102 100 117 110,110 101 115 102,102 90 103 92,92 91 101 94,94 79 98 83,83 75 90 75,
75 68 81 76,75 68 77 76,76 72 91 73,73 60 77 62,62 59 69 60,60 45 61 49,49 47 59 50,50 45 54 45,26 18 32 28,28 19 34 24,
24 13 25 18,18 16 32 21,21 21 35 33,33 25 36 29,29 21 32 25,25 15 27 18,18 17 23 19,19 18 28 26,26 23 36 33,33 28 46 43,
43 40 54 44,44 37 53 39,39 34 57 51,51 43 55 44,45 45 68 64,64 56 70 68,68 58 73 58,57 52 63 58,56 51 58 57,56 54 62 56,
56 49 60 50,53 50 75 54,54 54 83 81,81 73 87 76,76 73 88 86,87 76 88 85,85 77 86 82,82 69 84 70,70 61 72 64,64 63 75 74,
74 70 81 72,72 51 73 51,51 50 72 70,70 65 76 70,70 66 76 73,73 65 80 77,77 73 83 82,82 73 84 82,79 52 84 55,55 30 60 35,
35 29 39 36,35 29 43 35,35 33 40 36`;

var gapLate = [91, 93, 117, 138, 139, 163, 187];

var early = ['19 Dec 2013', '19 Dec 08:00', '19 Dec 16:00', '20 Dec 00:00', '20 Dec 08:00', '20 Dec 16:00',
    '23 Dec 02:00', '23 Dec 10:00', '23 Dec 18:00', '24 Dec 02:00', '24 Dec 10:00', '24 Dec 18:00'];
var earlyEur = ['19 Dec 2013', '19 Dec 09:00', '19 Dec 17:00', '20 Dec 01:00', '20 Dec 09:00', '20 Dec 17:00',
    '23 Dec 03:00', '23 Dec 11:00', '23 Dec 19:00', '24 Dec 03:00', '24 Dec 11:00', '24 Dec 19:00'];
var late = ['26 Dec 03:00', '26 Dec 11:00', '26 Dec 19:00', '27 Dec 03:00', '27 Dec 11:00', '27 Dec 19:00',
    '30 Dec 05:00', '30 Dec 13:00', '30 Dec 21:00', '31 Dec 05:00', '31 Dec 13:00'];

drawChart('eurjpy', {
    data: eurjpy, up: '#0f0', down: '#f00', rows: 158, sub: true, scale: 40, mark: 1476,
    days: [23, 44, 45, 69].concat(gapLate), times: earlyEur.concat(late),
    level: 9, levelText: '145.677', bid: 43, bidText: '144.776',
    prices: [[23, '145.300'], [56, '144.425'], [89, '143.550'], [122, '142.675'], [155, '141.825']]
});
drawChart('chfjpy', {
    data: chfjpy, up: '#ffc800', down: '#000', rows: 138, scale: 43, mark: 1470,
    days: [24, 45, 46, 70].concat(gapLate), times: early.concat(late),
    level: 8, levelText: '119.167', bid: 51, bidText: '118.042',
    prices: [[2, '119.300'], [35, '118.450'], [68, '117.575'], [101, '116.725'], [134, '115.875']]
});
drawChart('usdchf', {
    data: usdchf, up: '#ffc800', down: '#000', rows: 175, scale: 43, mark: 1475,
    days: [24, 45, 46, 70].concat(gapLate), times: early.concat(late),
    level: 162, levelText: '0.87984', bid: 80, bidText: '0.89126',
    prices: [[6, '0.90150'], [39, '0.89690'], [72, '0.89230'], [105, '0.88770'], [138, '0.88300'], [171, '0.87840']]
});
drawChart('usdjpy', {
    data: usdjpy, up: '#ffc800', down: '#000', rows: 241, scale: 43, mark: 1479,
    days: [24, 45, 46, 70].concat(gapLate), times: early.concat(late),
    level: 78, levelText: '104.920', bid: 36, bidText: '105.234',
    prices: [[7, '105.450'], [40, '105.205'], [73, '104.960'], [106, '104.715'], [139, '104.470'], [172, '104.225'], [205, '103.980'], [238, '103.735']],
    trends: true
});

function rect(x, y, w, h, fill) {
    return '<rect x="' + x + '" y="' + y + '" width="' + w + '" height="' + h + '" fill="' + fill + '"/>';
}

function drawChart(id, c) {
    var box = document.getElementById(id);
    var width = box.clientWidth;
    var right = width - c.scale;
    var top = 2;
    var bottom = top + c.rows;
    var axis = c.sub ? bottom + 10 : bottom;
    var height = axis + 18;
    var cross = 3 + 128 * 8;
    var out = '';

    // day separators
    c.days.forEach(function (i) {
        var x = 3.5 + i * 8;
        out += '<path d="M' + x + ' ' + top + 'V' + bottom + '" stroke="#fff" stroke-dasharray="3 3"/>';
        if (c.sub) {
            out += '<path d="M' + x + ' ' + (bottom + 4) + 'V' + axis + '" stroke="#fff" stroke-dasharray="3 3"/>';
        }
    });

    out += rect(3, top + c.bid, right - 3, 1, '#000');
    out += rect(cross, top, 1, c.rows, '#7fff00');
    out += '<path d="M' + (c.mark - 5) + ' 3h10l-5 5z" fill="#000"/>';

    if (c.trends) {
        out += '<path d="M3 24.500L178 3M935.500 243L' + right + ' 128.500" stroke="#f00" fill="none"/>';
    }
    out += rect(3, top + c.level, right - 3, 1, '#ff0');

    // candles
    out += '<svg x="3" width="' + (right - 3) + '" height="' + height + '">';
    c.data.split(',').forEach(function (row, i) {
        var v = row.trim().split(' ').map(Number);
        var x = i * 8;
        var y = top + Math.min(v[0], v[3]);
        var h = Math.abs(v[0] - v[3]) + 1;
        if (v[1] === v[2]) {
            out += rect(x - 2, y, 5, 1, c.down);
            return;
        }
        out += rect(x, top + v[1], 1, v[2] - v[1] + 1, '#fff');
        out += rect(x - 2, y, 5, h, '#fff');
        if (h > 2) {
            out += rect(x - 1, y + 1, 3, h - 2, v[3] < v[0] ? c.up : c.down);
        }
    });
    out += '</svg>';

    // frame
    out += rect(2, top, right - 2, 1, '#fff') + rect(2, top, 1, c.rows, '#fff');
    out += rect(right, top, 1, c.rows + 1, '#fff') + rect(2, bottom, right - 2, 1, '#fff');
    if (c.sub) {
        out += '<path d="M2.500 ' + (bottom + 2.5) + 'H' + (right + 0.5) + 'V' + (axis + 0.5) + 'H2.500z" fill="none" stroke="#fff"/>';
    }

    // time scale
    c.times.forEach(function (t, i) {
        var x = 3 + i * 64;
        out += rect(x, axis, 1, 4, '#fff');
        out += '<text x="' + (x - 1) + '" y="' + (axis + 13) + '">' + t + '</text>';
    });
    out += rect(cross - 40, axis + 4, 80, 11, '#7fff00');
    out += '<text class="stamp" x="' + (cross - 36) + '" y="' + (axis + 13) + '">2013.12.27 11:00</text>';

    // price scale
    c.prices.forEach(function (p) {
        out += rect(right, top + p[0], 3, 1, '#fff');
        out += '<text x="' + (right + 6) + '" y="' + (top + p[0] + 3) + '">' + p[1] + '</text>';
    });
    out += rect(right + 2, top + c.bid - 6, c.scale, 11, '#fff');
    out += '<text class="dark" x="' + (right + 6) + '" y="' + (top + c.bid + 3) + '">' + c.bidText + '</text>';
    out += rect(right + 2, top + c.level - 6, c.scale, 11, '#ff0');
    out += '<text class="dark" x="' + (right + 6) + '" y="' + (top + c.level + 3) + '">' + c.levelText + '</text>';

    box.insertAdjacentHTML('afterbegin', '<svg height="' + height + '" shape-rendering="crispEdges">' + out + '</svg>');
}
```
